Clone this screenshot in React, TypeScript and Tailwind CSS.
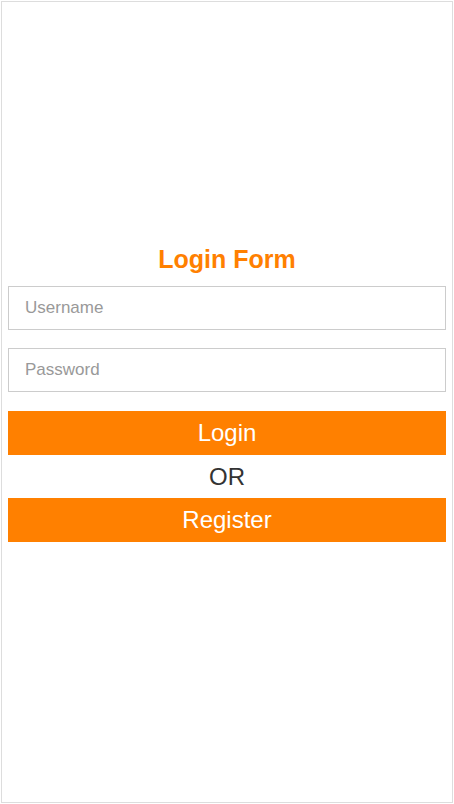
import React from "react"

const App: React.FC = () => {
  return (
    <div className="h-[804px] w-[454px] bg-white p-[1px] font-['Liberation_Sans',Arial,sans-serif]">
      <div className="flex h-full flex-col border border-[#dddddd] px-[6px] pt-[243px]">
        <h2 className="h-[28px] text-center text-[25px] font-bold leading-[28px] text-[#ff8000]">
          Login Form
        </h2>
        <form className="mt-[13px] flex flex-col" onSubmit={(e) => e.preventDefault()}>
          <input
            type="text"
            placeholder="Username"
            className="h-[44px] w-full border border-[#cccccc] px-[16px] text-[17px] text-[#333] outline-none placeholder:text-[#999999]"
          />
          <input
            type="password"
            placeholder="Password"
            className="mt-[18px] h-[44px] w-full border border-[#cccccc] px-[16px] text-[17px] text-[#333] outline-none placeholder:text-[#999999]"
          />
          <button
            type="submit"
            className="mt-[19px] h-[44px] w-full bg-[#ff8000] text-[24px] text-white"
          >
            Login
          </button>
          <div className="flex h-[43px] items-center justify-center text-[24px] text-[#333333]">
            OR
          </div>
          <button type="button" className="h-[44px] w-full bg-[#ff8000] text-[24px] text-white">
            Register
          </button>
        </form>
      </div>
    </div>
  )
}

export default App
